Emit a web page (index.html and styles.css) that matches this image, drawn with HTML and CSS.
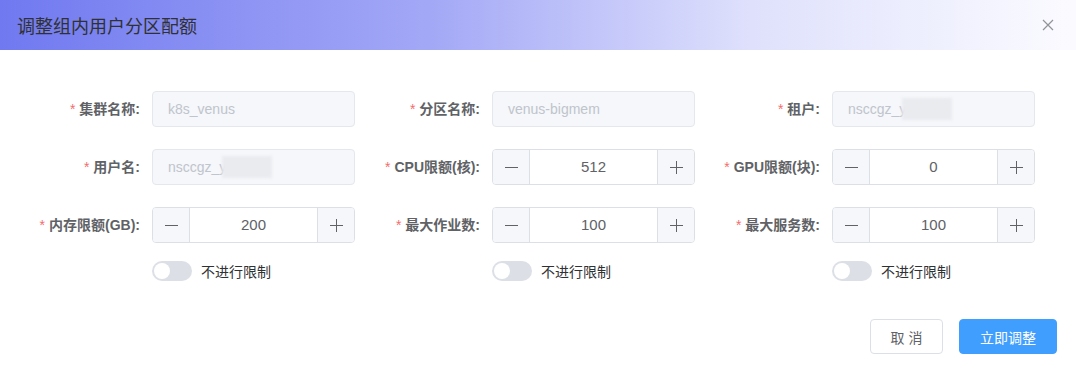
FILE: index.html
```html
<!DOCTYPE html>
<html lang="zh-CN">
<head>
<meta charset="utf-8">
<title>调整组内用户分区配额</title>
<link rel="stylesheet" href="styles.css">
</head>
<body>
<div class="dialog">
  <div class="dialog-header">
    <span class="dialog-title">调整组内用户分区配额</span>
    <button class="close-btn" aria-label="关闭">
      <svg width="12" height="12" viewBox="0 0 12 12"><path d="M1 1L11 11M11 1L1 11" stroke="#909399" stroke-width="1.2" fill="none"/></svg>
    </button>
  </div>
  <div class="dialog-body">
    <div class="form-grid">
      <div class="form-item">
        <label class="form-label"><span class="req">*</span>集群名称:</label>
        <div class="input disabled"><span>k8s_venus</span></div>
      </div>
      <div class="form-item">
        <label class="form-label"><span class="req">*</span>分区名称:</label>
        <div class="input disabled"><span>venus-bigmem</span></div>
      </div>
      <div class="form-item">
        <label class="form-label"><span class="req">*</span>租户:</label>
        <div class="input disabled"><span>nsccgz_y</span><span class="blur"></span></div>
      </div>

      <div class="form-item">
        <label class="form-label"><span class="req">*</span>用户名:</label>
        <div class="input disabled"><span>nsccgz_y</span><span class="blur"></span></div>
      </div>
      <div class="form-item">
        <label class="form-label"><span class="req">*</span>CPU限额(核):</label>
        <div class="number-input">
          <span class="num-btn minus"><svg width="13" height="13" viewBox="0 0 13 13"><path d="M0 6.5H13" stroke="#606266" stroke-width="1"/></svg></span>
          <span class="num-value">512</span>
          <span class="num-btn plus"><svg width="13" height="13" viewBox="0 0 13 13"><path d="M0 6.5H13M6.5 0V13" stroke="#606266" stroke-width="1"/></svg></span>
        </div>
      </div>
      <div class="form-item">
        <label class="form-label"><span class="req">*</span>GPU限额(块):</label>
        <div class="number-input">
          <span class="num-btn minus"><svg width="13" height="13" viewBox="0 0 13 13"><path d="M0 6.5H13" stroke="#606266" stroke-width="1"/></svg></span>
          <span class="num-value">0</span>
          <span class="num-btn plus"><svg width="13" height="13" viewBox="0 0 13 13"><path d="M0 6.5H13M6.5 0V13" stroke="#606266" stroke-width="1"/></svg></span>
        </div>
      </div>

      <div class="form-item">
        <label class="form-label"><span class="req">*</span>内存限额(GB):</label>
        <div class="field-stack">
          <div class="number-input">
            <span class="num-btn minus"><svg width="13" height="13" viewBox="0 0 13 13"><path d="M0 6.5H13" stroke="#606266" stroke-width="1"/></svg></span>
            <span class="num-value">200</span>
            <span class="num-btn plus"><svg width="13" height="13" viewBox="0 0 13 13"><path d="M0 6.5H13M6.5 0V13" stroke="#606266" stroke-width="1"/></svg></span>
          </div>
          <div class="switch-row"><span class="switch"><span class="knob"></span></span><span class="switch-text">不进行限制</span></div>
        </div>
      </div>
      <div class="form-item">
        <label class="form-label"><span class="req">*</span>最大作业数:</label>
        <div class="field-stack">
          <div class="number-input">
            <span class="num-btn minus"><svg width="13" height="13" viewBox="0 0 13 13"><path d="M0 6.5H13" stroke="#606266" stroke-width="1"/></svg></span>
            <span class="num-value">100</span>
            <span class="num-btn plus"><svg width="13" height="13" viewBox="0 0 13 13"><path d="M0 6.5H13M6.5 0V13" stroke="#606266" stroke-width="1"/></svg></span>
          </div>
          <div class="switch-row"><span class="switch"><span class="knob"></span></span><span class="switch-text">不进行限制</span></div>
        </div>
      </div>
      <div class="form-item">
        <label class="form-label"><span class="req">*</span>最大服务数:</label>
        <div class="field-stack">
          <div class="number-input">
            <span class="num-btn minus"><svg width="13" height="13" viewBox="0 0 13 13"><path d="M0 6.5H13" stroke="#606266" stroke-width="1"/></svg></span>
            <span class="num-value">100</span>
            <span class="num-btn plus"><svg width="13" height="13" viewBox="0 0 13 13"><path d="M0 6.5H13M6.5 0V13" stroke="#606266" stroke-width="1"/></svg></span>
          </div>
          <div class="switch-row"><span class="switch"><span class="knob"></span></span><span class="switch-text">不进行限制</span></div>
        </div>
      </div>
    </div>
  </div>
  <div class="dialog-footer">
    <button class="btn">取 消</button>
    <button class="btn primary">立即调整</button>
  </div>
</div>
</body>
</html>
```
FILE: styles.css
```css
html, body {
  margin: 0;
  padding: 0;
  background: #fff;
}
body {
  font-family: "Liberation Sans", "Noto Sans CJK SC", sans-serif;
  font-size: 14px;
  color: #606266;
  width: 1076px;
  height: 373px;
  overflow: hidden;
}
.dialog {
  width: 1076px;
  height: 373px;
  display: flex;
  flex-direction: column;
}
.dialog-header {
  height: 50px;
  flex: none;
  display: flex;
  align-items: center;
  justify-content: space-between;
  padding: 0 20px 0 17px;
  background: linear-gradient(to right, #7079f0 0%, #a3a8f6 40%, #dfe1fc 70%, #fbfbff 100%);
}
.dialog-title {
  font-size: 18px;
  color: #303133;
  line-height: 24px;
  padding-top: 4px;
}
.close-btn {
  border: 0;
  background: none;
  padding: 0;
  width: 14px;
  height: 14px;
  display: flex;
  align-items: center;
  justify-content: center;
  margin-right: 1px;
}
.dialog-body {
  padding: 41px 0 0 15px;
  flex: none;
}
.form-grid {
  display: grid;
  grid-template-columns: 340px 340px 340px;
  row-gap: 22px;
  align-items: start;
}
.form-item {
  display: flex;
  align-items: flex-start;
}
.form-label {
  width: 137px;
  flex: none;
  box-sizing: border-box;
  padding-right: 12px;
  text-align: right;
  font-weight: bold;
  color: #606266;
  line-height: 36px;
  font-size: 14px;
}
.req {
  color: #f56c6c;
  font-weight: normal;
  margin-right: 4px;
}
.input {
  width: 203px;
  height: 36px;
  box-sizing: border-box;
  border: 1px solid #e4e7ed;
  border-radius: 4px;
  display: flex;
  align-items: center;
  padding: 0 15px;
}
.input.disabled {
  background: #f5f7fa;
  color: #c0c4cc;
}
.blur {
  display: inline-block;
  width: 50px;
  height: 22px;
  background: #e9ebef;
  margin-left: -4px;
  filter: blur(1.5px);
}
.field-stack {
  display: flex;
  flex-direction: column;
  gap: 18px;
}
.number-input {
  width: 203px;
  height: 36px;
  box-sizing: border-box;
  border: 1px solid #dcdfe6;
  border-radius: 4px;
  display: flex;
  overflow: hidden;
}
.num-btn {
  width: 36px;
  flex: none;
  background: #f5f7fa;
  display: flex;
  align-items: center;
  justify-content: center;
}
.num-btn.minus { border-right: 1px solid #dcdfe6; }
.num-btn.plus { border-left: 1px solid #dcdfe6; }
.num-value {
  flex: 1;
  text-align: center;
  line-height: 34px;
  color: #606266;
  font-size: 15px;
}
.switch-row {
  display: flex;
  align-items: center;
  height: 20px;
  gap: 9px;
}
.switch {
  width: 40px;
  height: 20px;
  border-radius: 10px;
  background: #dcdfe6;
  box-sizing: border-box;
  padding: 2px;
  display: flex;
}
.knob {
  width: 16px;
  height: 16px;
  border-radius: 50%;
  background: #fff;
}
.switch-text {
  color: #303133;
  font-size: 14px;
}
.dialog-footer {
  display: flex;
  justify-content: flex-end;
  gap: 16px;
  padding: 38px 19px 0 0;
}
.btn {
  height: 35px;
  box-sizing: border-box;
  border: 1px solid #dcdfe6;
  border-radius: 4px;
  background: #fff;
  color: #606266;
  font-family: inherit;
  font-size: 14px;
  width: 73px;
  padding: 0;
}
.btn.primary {
  width: 98px;
  background: #409eff;
  border-color: #409eff;
  color: #fff;
}
```
